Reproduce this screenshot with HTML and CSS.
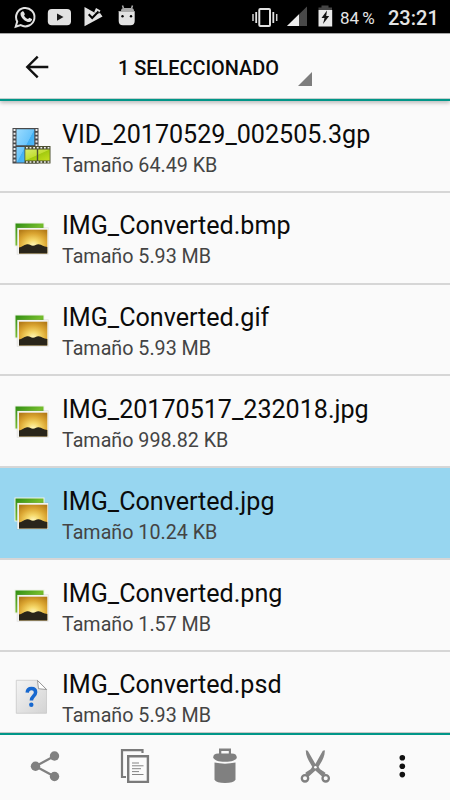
FILE: index.html
```html
<!DOCTYPE html>
<html lang="es">
<head>
<meta charset="utf-8">
<title>Archivos</title>
<link rel="stylesheet" href="styles.css">
</head>
<body>
<svg class="defs" width="0" height="0" aria-hidden="true">
  <defs>
    <linearGradient id="green" x1="0" y1="0" x2="1" y2="1"><stop offset="0" stop-color="#2f8d12"/><stop offset=".5" stop-color="#74bd2c"/><stop offset="1" stop-color="#399313"/></linearGradient>
    <radialGradient id="sun" cx=".5" cy=".65" r=".75"><stop offset="0" stop-color="#fff6b8"/><stop offset=".3" stop-color="#f5d768"/><stop offset=".65" stop-color="#dba632"/><stop offset="1" stop-color="#b47b18"/></radialGradient>
    <linearGradient id="blue" x1="0" y1="0" x2="1" y2="1"><stop offset="0" stop-color="#9bdcff"/><stop offset=".5" stop-color="#6bc5fb"/><stop offset=".52" stop-color="#42b0f4"/><stop offset="1" stop-color="#5cc0fa"/></linearGradient>
    <linearGradient id="lime" x1="0" y1="0" x2="1" y2="1"><stop offset="0" stop-color="#d6ea6a"/><stop offset=".48" stop-color="#c3df35"/><stop offset=".52" stop-color="#a3ca10"/><stop offset="1" stop-color="#c6e01d"/></linearGradient>
    <linearGradient id="paper" x1="0" y1="0" x2="1" y2="1"><stop offset="0" stop-color="#f4f4f4"/><stop offset="1" stop-color="#d3d3d3"/></linearGradient>
    <symbol id="picture" viewBox="0 0 62 92">
      <path d="M14.5 29.5h30v24h-30z" fill="#eef3e9"/>
      <path d="M15.5 30.5h28v22h-28z" fill="url(#green)"/>
      <path d="M16.8 34.5h31.7v27H16.8z" fill="#8b8b8b" opacity=".3"/>
      <path d="M17.3 35h30.9v26H17.3z" fill="#f3f3f0"/>
      <path d="M19 36.7h28.3v23.8H19z" fill="url(#sun)"/>
      <path d="M19 54.5c3-.4 4.500-2.500 8-3.200 3-.4 3.500 1.300 6 1.500 2.500-.2 3-1.600 5.500-1.500 3.500.4 5 2.500 8.800 2.800v6.400H19z" fill="#29251a"/>
    </symbol>
  </defs>
</svg>

<div class="screen">
  <div class="status">
    <svg class="status-left" width="150" height="33" viewBox="0 0 150 33">
      <path d="M15.7 26.700l1.500-5.200a9.200 9.200 0 1 1 3.500 3.600z" fill="none" stroke="#e2e2e2" stroke-width="2"/>
      <path d="M21.800 11.700c1-.8 1.800-.4 2.200.5l.8 1.800c.2.5-.8 1.600-.8 1.600 1 1.800 2.200 2.800 4 3.500l1.400-1.400 2.500 1.400c.5.5-.3 2.800-2.400 3-3.900.3-9.200-4.600-9-8.400 0-.9.6-1.500 1.300-2z" fill="#e2e2e2"/>
      <rect x="47.800" y="9" width="23.200" height="16.300" rx="4" fill="#e2e2e2"/><path d="M57 13.500l6.500 3.600-6.500 3.700z" fill="#181818"/>
      <path d="M84.500 7l9 5 3.500 2 3-1 2.500 3.500-18 9.700z" fill="#e2e2e2"/><path d="M96 8l4.500 2.500-2 3-4.500-1z" fill="#e2e2e2"/><path d="M88.700 14.300l3.500 3.700 6.300-6.500" fill="none" stroke="#000" stroke-width="2"/>
      <path d="M122.500 5.500l1 3M132.500 5.500l-1 3" stroke="#aaa" stroke-width="1.500"/>
      <path d="M121 11q0-3 3-3h7q3 0 3 3z" fill="#aaa"/><path d="M118.700 12h16v9q0 4.200-4.200 4.200h-7.600q-4.200 0-4.200-4.200z" fill="#e2e2e2"/>
      <path d="M118.500 11.500h16.300" stroke="#aaa"/><circle cx="122.500" cy="16.300" r="1.200"/><circle cx="131" cy="16.300" r="1.200"/>
    </svg>
    <svg class="status-right" width="90" height="33" viewBox="250 0 90 33">
      <rect x="259.300" y="8.900" width="10.700" height="17" rx="1" fill="none" stroke="#e2e2e2" stroke-width="2"/>
      <path d="M256.200 12v11M273.300 12v11" stroke="#e2e2e2" stroke-width="1.800"/><path d="M253 14v7M276.700 14v7" stroke="#d0d0d0" stroke-width="1.500"/>
      <path d="M287 26L307 6.500V26z" fill="#484848"/><path d="M287 26l12-11.700V26z" fill="#eee"/>
      <path d="M318.500 10V7.500h3V5.500h7v2h3.500V10z" fill="#444"/><path d="M318.500 10h13.700v16.500h-13.700z" fill="#e8e8e8"/><path d="M327 10.500l-5.500 7.500h3l-1.500 6 6.200-8h-3z" fill="#111"/>
    </svg>
    <span class="battery">84 %</span>
    <span class="clock">23:21</span>
  </div>

  <div class="header">
    <svg class="back" width="24" height="24" viewBox="0 0 24 24"><path d="M12.700 1.700L2.300 12l10.400 10.300M2.300 12h21" fill="none" stroke="#111" stroke-width="2.400"/></svg>
    <span class="title">1 SELECCIONADO</span>
    <svg class="corner" width="14" height="14" viewBox="0 0 14 14"><path d="M14 0v14H0z" fill="#7d7d7d"/></svg>
  </div>

  <div class="list">
    <div class="row">
      <svg class="thumb" viewBox="0 0 62 92">
        <path d="M12.500 27h26v35.500h-26z" fill="#49494b"/>
        <path d="M14.500 28v34M36.500 28v18" stroke="#eee" stroke-width="2" stroke-dasharray="2 1.800"/>
        <path d="M16.500 28.200h17.800v16H16.500zM16.500 46h17.800v15.500H16.500z" fill="url(#blue)"/>
        <path d="M24.500 45h26v17.500h-26z" fill="#4d5032"/>
        <path d="M26 46.800h24M26 61h24" stroke="#eee" stroke-width="1.500" stroke-dasharray="1.800 1.800"/>
        <path d="M25.300 48.500h11.500v11H25.300zM38.200 48.500h11.500v11H38.200z" fill="url(#lime)"/>
      </svg>
      <div class="info"><div class="name">VID_20170529_002505.3gp</div><div class="size">Tamaño 64.49 KB</div></div>
    </div>
    <div class="row"><svg class="thumb"><use href="#picture"/></svg><div class="info"><div class="name">IMG_Converted.bmp</div><div class="size">Tamaño 5.93 MB</div></div></div>
    <div class="row"><svg class="thumb"><use href="#picture"/></svg><div class="info"><div class="name">IMG_Converted.gif</div><div class="size">Tamaño 5.93 MB</div></div></div>
    <div class="row"><svg class="thumb"><use href="#picture"/></svg><div class="info"><div class="name">IMG_20170517_232018.jpg</div><div class="size">Tamaño 998.82 KB</div></div></div>
    <div class="row selected"><svg class="thumb"><use href="#picture"/></svg><div class="info"><div class="name">IMG_Converted.jpg</div><div class="size">Tamaño 10.24 KB</div></div></div>
    <div class="row"><svg class="thumb"><use href="#picture"/></svg><div class="info"><div class="name">IMG_Converted.png</div><div class="size">Tamaño 1.57 MB</div></div></div>
    <div class="row">
      <svg class="thumb" viewBox="0 0 62 92">
        <path d="M16.300 28.300h21.200l9 9v24H16.300z" fill="url(#paper)" stroke="#c4c4c4" stroke-width=".7"/>
        <path d="M37.500 28.500l9 9-8-.8z" fill="#fff" stroke="#777" stroke-width=".7"/>
        <path d="M27.200 40.700c.2-3 2-4.300 4.300-4.300 2.500 0 4.100 1.400 4.100 3.800 0 3.800-4.200 3.700-4.200 8.300" fill="none" stroke="#1768cf" stroke-width="3.500"/>
        <circle cx="31.300" cy="52.800" r="2.200" fill="#1768cf"/>
      </svg>
      <div class="info"><div class="name">IMG_Converted.psd</div><div class="size">Tamaño 5.93 MB</div></div>
    </div>
  </div>

  <div class="toolbar">
    <svg viewBox="0 0 90 65"><path d="M54.500 21L35.500 31.300l19 10.200" fill="none" stroke="#808080" stroke-width="2.300"/><g fill="#808080"><circle cx="54.500" cy="21" r="4.700"/><circle cx="35.500" cy="31.300" r="4.700"/><circle cx="54.500" cy="41.500" r="4.700"/></g></svg>
    <svg viewBox="90 0 90 65"><path d="M126 42h-4V15.200h20.500V18" fill="none" stroke="#7a7a7a" stroke-width="2.200"/><path d="M128.200 21.200h19.700v25.700h-19.700z" fill="#fbfbfb" stroke="#7a7a7a" stroke-width="2.400"/><path d="M132 28h7M132 30.800h11.500M132 33.700h9M132 36.600h7M132 39.500h11.500" stroke="#858585"/></svg>
    <svg viewBox="180 0 90 65"><g fill="#808080"><path d="M219 19v-5.500h12V19h-2.200v-3h-7.500v3z"/><path d="M213.200 22.500q0-4 5-4h13.600q5 0 5 4.300c-1 2.500-5 4-11.800 4s-10.800-1.500-11.800-4.300z"/><path d="M214.500 27.500q10.500 2.300 21 0v17.300q-2 3.200-10.500 3.200t-10.500-3.200z"/></g></svg>
    <svg viewBox="270 0 90 65"><path d="M305.800 15.200l2 .5 7.600 13.300 7.400-13.300 2-.5c.3 6.500-3 11-6.200 16.500 1.500 3.500 4.700 4 7 6.300l-3 4-7.200-6.500-7.200 6.500-3-4c2.300-2.300 5.500-2.800 7-6.300-3.200-5.500-6.500-10-6.400-16.500z" fill="#858585"/><circle cx="315.400" cy="32.300" r="1.300" fill="#fff"/><g fill="#fafafa" stroke="#808080" stroke-width="2.300"><circle cx="305" cy="43.300" r="3.200"/><circle cx="325.700" cy="43.300" r="3.200"/></g></svg>
    <svg viewBox="360 0 90 65"><g fill="#111"><circle cx="402.300" cy="22.800" r="2.800"/><circle cx="402.300" cy="31.200" r="2.800"/><circle cx="402.300" cy="39.600" r="2.800"/></g></svg>
  </div>
</div>
</body>
</html>
```
FILE: styles.css
```css
* { box-sizing: border-box; }

body {
  margin: 0;
  font-family: Roboto, "Liberation Sans", sans-serif;
  background: #fafafa;
  color: #0b0b0b;
}

svg { display: block; flex: none; }
.defs { position: absolute; }

.screen {
  display: flex;
  flex-direction: column;
  width: 450px;
  height: 800px;
  overflow: hidden;
}

.status {
  display: flex;
  flex: none;
  height: 33px;
  background: #000;
  color: #e4e4e4;
  white-space: nowrap;
}
.status-right { margin-left: 100px; }
.battery { width: 48px; font-size: 17px; line-height: 36px; word-spacing: -1px; }
.clock { font-size: 20px; line-height: 36px; font-weight: 500; }

.header {
  display: flex;
  flex: none;
  position: relative;
  align-items: center;
  height: 68px;
  padding: 4px 0 3px 25px;
  border-top: 1px solid #a5a5a5;
  border-bottom: 2px solid #009688;
  background: #fafafa;
  box-shadow: inset 0 -1px #c4d0ce, 0 2px 4px rgba(0, 0, 0, .25);
}
.title { width: 180px; margin-left: 69px; padding-top: 2px; font-size: 19.9px; font-weight: 500; white-space: nowrap; }
.corner { margin-top: 24px; }

.list { flex: 1; min-height: 0; overflow: hidden; }
.row {
  display: flex;
  height: 91.8px;
  border-bottom: 2px solid #d6d6d6;
}
.row.selected { background: #97d6f0; }
.thumb { width: 62px; height: 92px; }
.info { padding-top: 17.6px; white-space: nowrap; }
.name { font-size: 25.1px; line-height: 32px; }
.size { font-size: 19.7px; line-height: 30px; color: #444; }

.toolbar {
  display: grid;
  grid-template-columns: repeat(5, 90px);
  flex: none;
  height: 68px;
  border-top: 1px solid #c6c6c6;
  background: #fafafa;
  box-shadow: inset 0 2px #009688;
}
.toolbar svg { width: 90px; height: 65px; margin-top: 2px; }
```
